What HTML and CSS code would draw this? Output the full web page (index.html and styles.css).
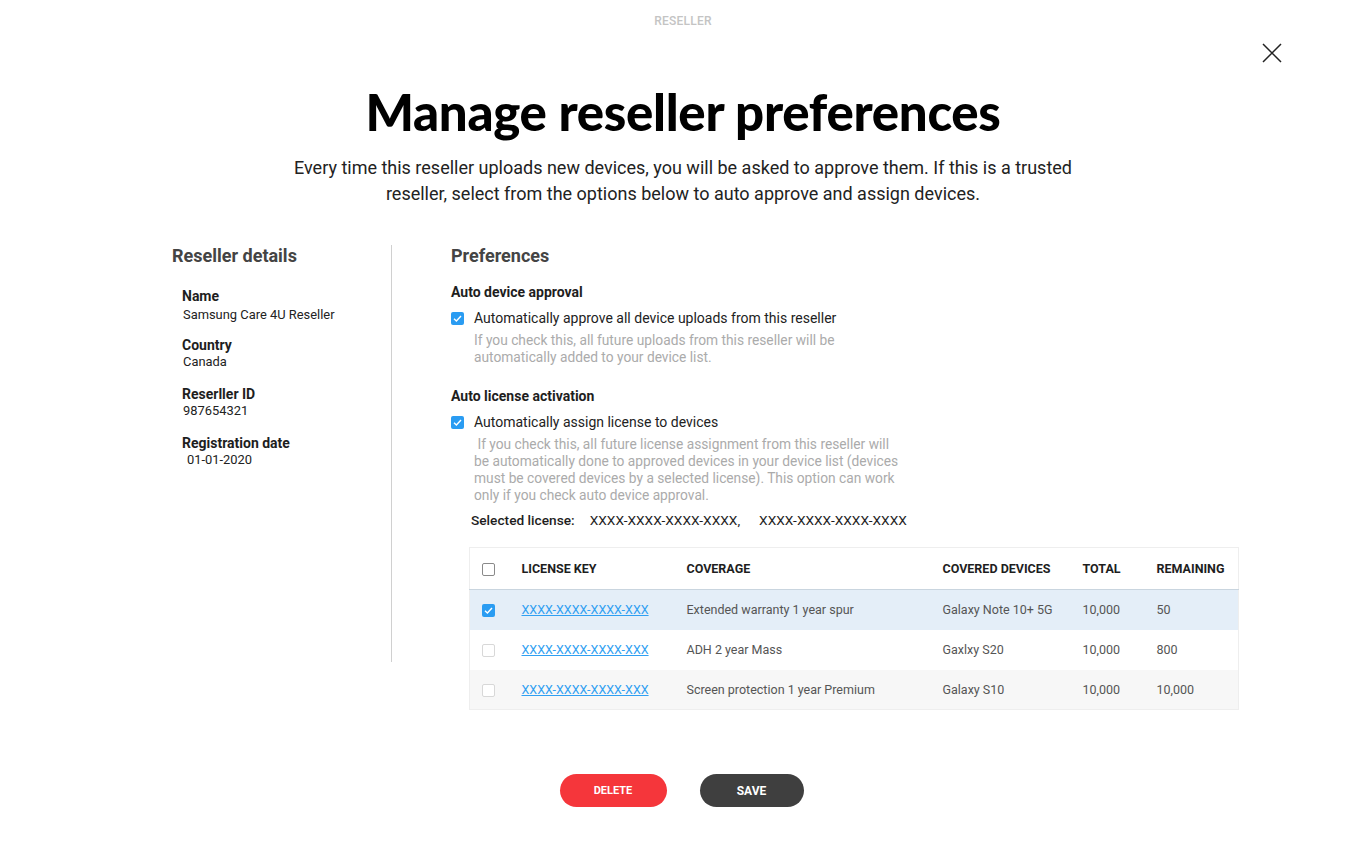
FILE: index.html
```html
<!DOCTYPE html>
<html lang="en">
<head>
<meta charset="utf-8">
<title>Manage reseller preferences</title>
<link rel="stylesheet" href="styles.css">
</head>
<body>
<div class="page">
  <div class="top-label">RESELLER</div>
  <button class="close" aria-label="Close">
    <svg width="20" height="20" viewBox="0 0 20 20"><path d="M1 1 L19 19 M19 1 L1 19" stroke="#222" stroke-width="1.5" fill="none"/></svg>
  </button>
  <h1 class="title">Manage reseller preferences</h1>
  <p class="desc">Every time this reseller uploads new devices, you will be asked to approve them. If this is a trusted<br>reseller, select from the options below to auto approve and assign devices.</p>

  <div class="content">
    <aside class="details">
      <h2 class="section-title">Reseller details</h2>
      <dl class="fields">
        <div class="field"><dt>Name</dt><dd>Samsung Care 4U Reseller</dd></div>
        <div class="field"><dt>Country</dt><dd>Canada</dd></div>
        <div class="field"><dt>Reserller ID</dt><dd>987654321</dd></div>
        <div class="field"><dt>Registration date</dt><dd class="indent">01-01-2020</dd></div>
      </dl>
    </aside>

    <section class="prefs">
      <h2 class="section-title">Preferences</h2>

      <h3 class="sub">Auto device approval</h3>
      <div class="check-row">
        <span class="cb cb-on"><svg viewBox="0 0 13 13"><path d="M3 6.8 L5.4 9 L10 4" stroke="#fff" stroke-width="1.4" fill="none"/></svg></span>
        <span class="check-label">Automatically approve all device uploads from this reseller</span>
      </div>
      <p class="help">If you check this, all future uploads from this reseller will be<br>automatically added to your device list.</p>

      <h3 class="sub sub2">Auto license activation</h3>
      <div class="check-row">
        <span class="cb cb-on"><svg viewBox="0 0 13 13"><path d="M3 6.8 L5.4 9 L10 4" stroke="#fff" stroke-width="1.4" fill="none"/></svg></span>
        <span class="check-label">Automatically assign license to devices</span>
      </div>
      <p class="help">&nbsp;If you check this, all future license assignment from this reseller will<br>be automatically done to approved devices in your device list (devices<br>must be covered devices by a selected license). This option can work<br>only if you check auto device approval.</p>

      <div class="selected">
        <span class="sel-label">Selected license:</span>
        <span class="sel-key">XXXX-XXXX-XXXX-XXXX,</span>
        <span class="sel-key">XXXX-XXXX-XXXX-XXXX</span>
      </div>

      <table class="licenses">
        <thead>
          <tr>
            <th class="c-cb"><span class="cb cb-head"></span></th>
            <th class="c-key">LICENSE KEY</th>
            <th class="c-cov">COVERAGE</th>
            <th class="c-dev">COVERED DEVICES</th>
            <th class="c-tot">TOTAL</th>
            <th class="c-rem">REMAINING</th>
          </tr>
        </thead>
        <tbody>
          <tr class="row-selected">
            <td class="c-cb"><span class="cb cb-on cb-small"><svg viewBox="0 0 13 13"><path d="M3 6.8 L5.4 9 L10 4" stroke="#fff" stroke-width="1.4" fill="none"/></svg></span></td>
            <td class="c-key"><a href="#">XXXX-XXXX-XXXX-XXX</a></td>
            <td>Extended warranty 1 year spur</td>
            <td>Galaxy Note 10+ 5G</td>
            <td>10,000</td>
            <td>50</td>
          </tr>
          <tr>
            <td class="c-cb"><span class="cb cb-off"></span></td>
            <td class="c-key"><a href="#">XXXX-XXXX-XXXX-XXX</a></td>
            <td>ADH 2 year Mass</td>
            <td>Gaxlxy S20</td>
            <td>10,000</td>
            <td>800</td>
          </tr>
          <tr class="row-alt">
            <td class="c-cb"><span class="cb cb-off"></span></td>
            <td class="c-key"><a href="#">XXXX-XXXX-XXXX-XXX</a></td>
            <td>Screen protection 1 year Premium</td>
            <td>Galaxy S10</td>
            <td>10,000</td>
            <td>10,000</td>
          </tr>
        </tbody>
      </table>
    </section>
  </div>

  <div class="actions">
    <button class="btn btn-delete">DELETE</button>
    <button class="btn btn-save">SAVE</button>
  </div>
</div>
</body>
</html>
```

FILE: styles.css
```css
* { box-sizing: border-box; }
html, body { margin: 0; padding: 0; background: #fff; }
body {
  font-family: Roboto, "Noto Sans", "Liberation Sans", sans-serif;
  color: #1e1e1e;
}
.page { position: relative; width: 1366px; min-height: 851px; }

.top-label {
  text-align: center;
  padding-top: 14px;
  font-size: 12px;
  font-weight: 500;
  letter-spacing: 0.2px;
  color: #c4c4c4;
  line-height: 14px;
}
.close {
  position: absolute;
  top: 42px;
  left: 1262px;
  width: 22px;
  height: 22px;
  padding: 0;
  border: 0;
  background: none;
}
.close svg { display: block; width: 20px; height: 20px; }

.title {
  margin: 54px 0 0;
  text-align: center;
  font-family: Lato, "Open Sans", sans-serif;
  font-weight: 900;
  font-size: 51px;
  line-height: 60px;
  letter-spacing: -0.3px;
  color: #000;
}
.desc {
  margin: 13px 0 0;
  text-align: center;
  font-size: 18px;
  line-height: 26px;
  color: #222;
}

.content {
  display: flex;
  padding-left: 172px;
  margin-top: 38px;
}
.details {
  width: 220px;
  height: 417px;
  border-right: 1px solid #d0d0d0;
}
.section-title {
  margin: 0;
  font-size: 18px;
  font-weight: 700;
  line-height: 22px;
  color: #444;
}
.fields { margin: 21px 0 0 10px; }
.field { margin-bottom: 16px; }
.field dt { font-size: 14px; font-weight: 700; line-height: 17px; color: #1e1e1e; }
.field dd { margin: 0 0 0 1px; font-size: 12.9px; line-height: 16px; color: #222; }
.field dd.indent { padding-left: 4px; }
.field:first-child { margin-bottom: 14px; }
.field:first-child dd { margin-top: 2px; }

.prefs { padding-left: 59px; width: 846px; }
.sub {
  margin: 17px 0 0;
  font-size: 14px;
  font-weight: 700;
  line-height: 17px;
  color: #1e1e1e;
}
.sub2 { margin-top: 22px; }
.check-row {
  display: flex;
  align-items: center;
  margin-top: 8px;
  gap: 10px;
}
.check-label { font-size: 14px; line-height: 18px; color: #222; }
.help {
  margin: 5px 0 0 23px;
  font-size: 13.75px;
  line-height: 17px;
  color: #ababab;
}

.cb {
  display: inline-block;
  width: 13px;
  height: 13px;
  border-radius: 2px;
  flex: none;
  vertical-align: middle;
}
.cb svg { display: block; width: 13px; height: 13px; }
.cb-on { background: #2a9cf2; }
.cb-head { border: 1px solid #8a8a8a; background: #fff; }
.cb-off { border: 1px solid #d8d8d8; background: #fff; }

.selected {
  margin: 7px 0 0 20px;
  font-size: 13.7px;
  line-height: 18px;
  color: #1e1e1e;
  display: flex;
}
.sel-label { font-weight: 500; margin-right: 15px; }
.sel-key { margin-right: 19px; }

.licenses {
  margin: 18px 0 0 18px;
  width: 770px;
  border-collapse: collapse;
  border: 1px solid #eeeeee;
  font-size: 12.5px;
}
.licenses th {
  text-align: left;
  font-weight: 700;
  font-size: 12.5px;
  color: #1e1e1e;
  height: 42px;
  border-bottom: 1px solid #c9d5df;
  padding: 0;
}
.licenses td {
  height: 40px;
  padding: 0;
  color: #555;
}
.licenses .c-cb { width: 52px; padding-left: 12px; }
.licenses .c-key { width: 165px; }
.licenses .c-cov { width: 256px; }
.licenses .c-dev { width: 140px; }
.licenses .c-tot { width: 74px; }
.row-selected td { background: #e4eef8; }
.row-alt td { background: #f7f7f7; }
.licenses a { color: #2f9ff2; text-decoration: underline; }

.actions {
  display: flex;
  justify-content: center;
  gap: 33px;
  margin-top: 64px;
  padding-right: 3px;
}
.btn {
  height: 33px;
  border: 0;
  border-radius: 17px;
  color: #fff;
  font-family: Roboto, "Noto Sans", sans-serif;
  font-weight: 700;
  cursor: pointer;
}
.btn-delete { width: 107px; background: #f5363b; font-size: 11px; }
.btn-save { width: 104px; background: #3f3f3f; font-size: 12px; }
```
